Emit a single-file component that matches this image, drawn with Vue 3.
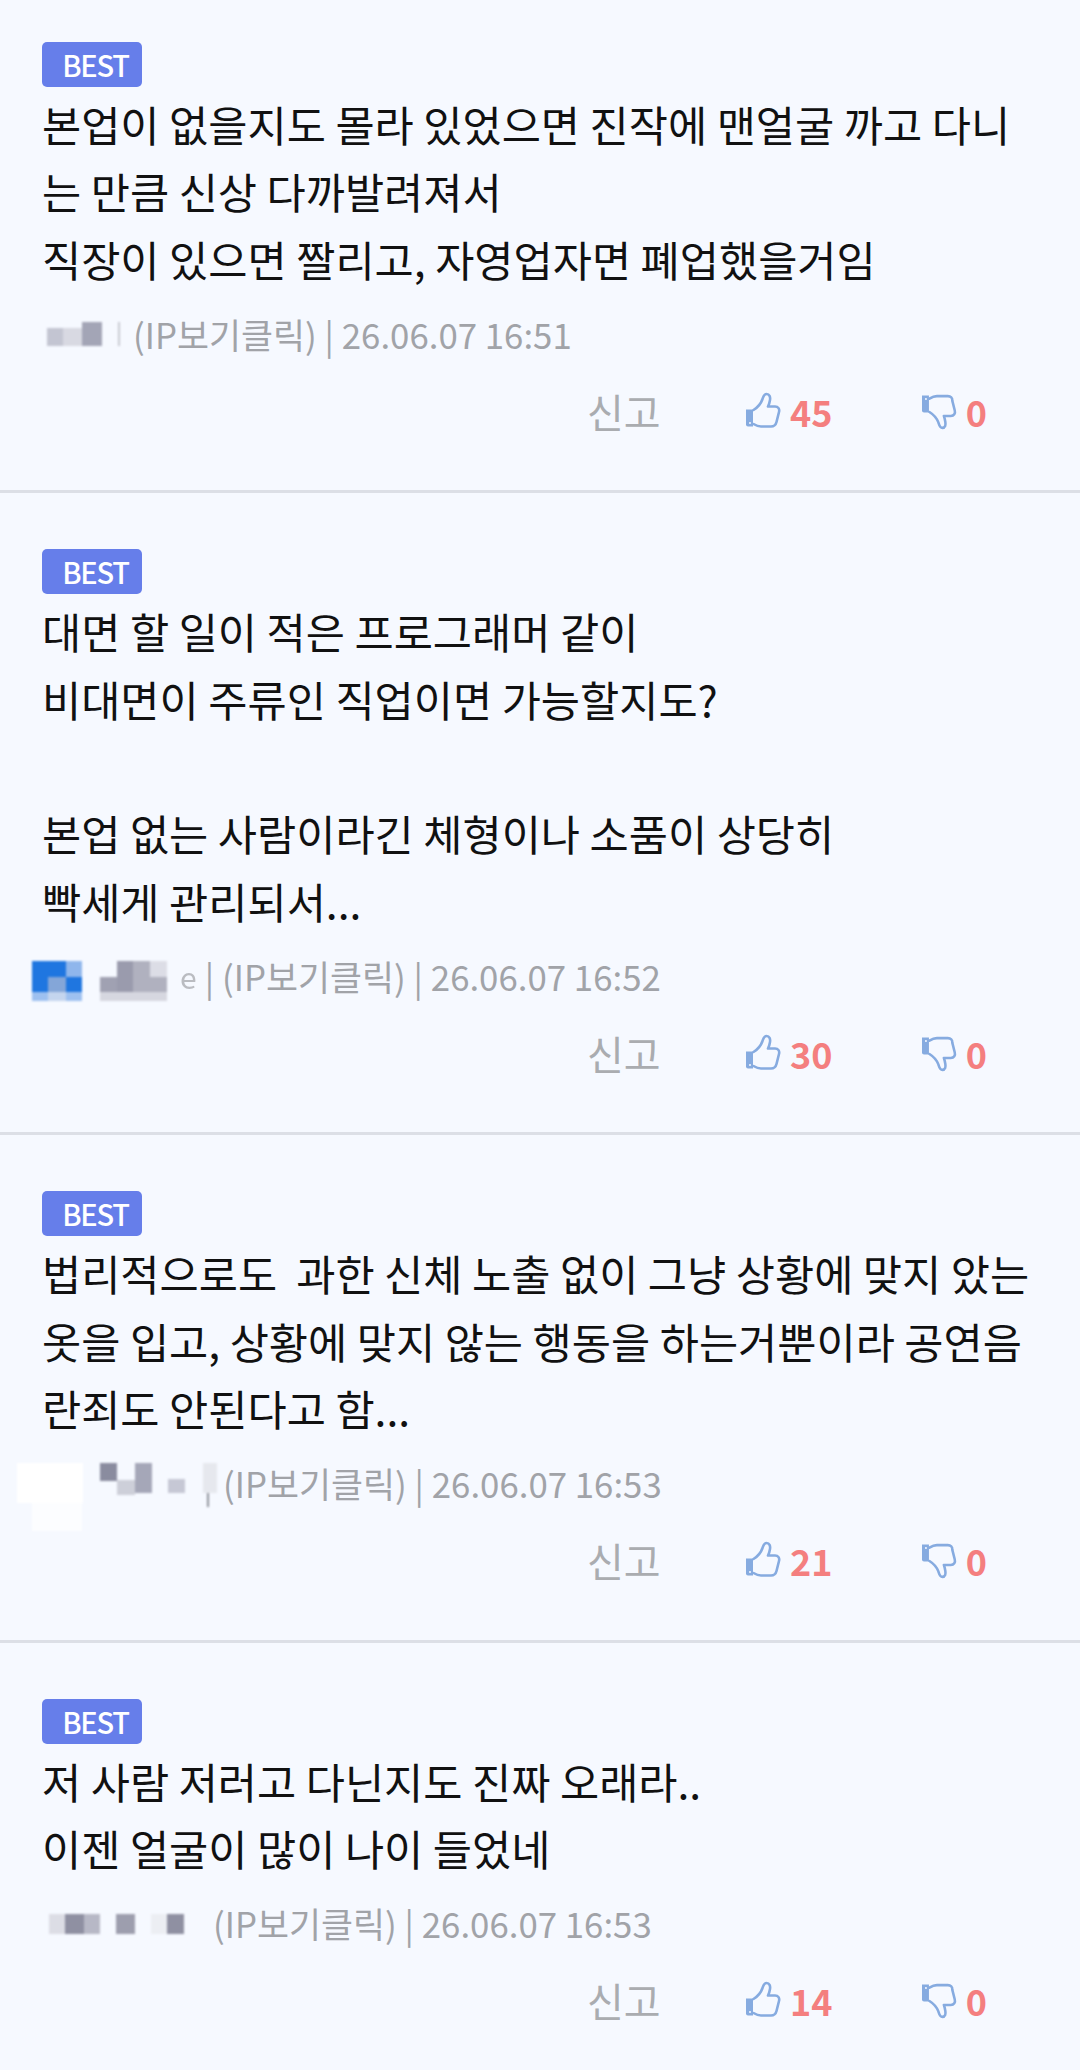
<template>
  <div class="list">
    <div class="item" v-for="c in comments" :key="c.date + c.up">
      <span class="badge">BEST</span>
      <div class="body">
        <p v-for="(line, i) in c.lines" :key="i" class="line">{{ line || "\u00a0" }}</p>
      </div>
      <div class="meta">
        <svg class="nick" :width="c.nickW" height="44" :viewBox="`0 0 ${c.nickW} 44`">
          <rect
            v-for="(b, i) in c.blocks"
            :key="i"
            :x="b[0]"
            :y="b[1]"
            :width="b[2]"
            :height="b[3]"
            :fill="b[4]"
          />
        </svg>
        <span v-if="c.tail" class="tail">{{ c.tail }}</span>
        <span v-if="c.tail" class="pipe">|</span>
        <span class="info">(IP보기클릭) | {{ c.date }}</span>
      </div>
      <div class="actions">
        <span class="report">신고</span>
        <span class="vote up">
          <svg width="36" height="38" viewBox="0 0 36 38">
            <path d="M1 17.500h7v17H3a2 2 0 0 1-2-2z" fill="#86abe0" />
            <circle cx="5" cy="31" r="1" fill="#f6f9ff" />
            <path
              d="M8.500 18c4-2.500 7.500-6.500 9-11 .8-2.500 1.500-5 4-5 3 0 4 3 3.500 6-.3 2-1 4.500-2 6.500h7c3.300 0 4.800 2.500 4 5.500l-2.500 10c-.7 2.800-2.500 4.500-5.500 4.500H16c-3 0-5-1-7.500-2.500"
              fill="none"
              stroke="#86abe0"
              stroke-width="2.600"
              stroke-linecap="round"
              stroke-linejoin="round"
            />
          </svg>
          <b>{{ c.up }}</b>
        </span>
        <span class="vote down">
          <svg width="36" height="38" viewBox="0 0 36 38">
            <path d="M1 3.500h7v17H3a2 2 0 0 1-2-2z" fill="#86abe0" />
            <circle cx="5" cy="7" r="1" fill="#f6f9ff" />
            <path
              d="M8.500 20c4 2.500 7.500 6.500 9 10.500.8 2.500 1.500 5.500 4 5.500 3 0 3.500-3 3-6-.3-2-1-4.500-1.500-6h7c3.300 0 4.800-2.500 4-5.500l-2.500-10C31.800 5.700 30 4 27 4H16c-3 0-5 1-7.500 2.500"
              fill="none"
              stroke="#86abe0"
              stroke-width="2.600"
              stroke-linecap="round"
              stroke-linejoin="round"
            />
          </svg>
          <b>{{ c.down }}</b>
        </span>
      </div>
    </div>
  </div>
</template>

<script setup>
const comments = [
  {
    lines: [
      "본업이 없을지도 몰라 있었으면 진작에 맨얼굴 까고 다니",
      "는 만큼 신상 다까발려져서",
      "직장이 있으면 짤리고, 자영업자면 폐업했을거임",
    ],
    nickW: 91,
    date: "26.06.07 16:51",
    up: 45,
    down: 0,
    blocks: [
      [5, 16, 16, 18, "#c3c5d2"],
      [21, 16, 19, 18, "#d8d9e2"],
      [40, 10, 20, 24, "#a3a5b6"],
      [76, 10, 2, 24, "#c9cad2"],
    ],
  },
  {
    lines: [
      "대면 할 일이 적은 프로그래머 같이",
      "비대면이 주류인 직업이면 가능할지도?",
      "",
      "본업 없는 사람이라긴 체형이나 소품이 상당히",
      "빡세게 관리되서...",
    ],
    nickW: 138,
    tail: "e",
    date: "26.06.07 16:52",
    up: 30,
    down: 0,
    blocks: [
      [-10, 7, 16, 16, "#1f76e0"],
      [6, 7, 18, 16, "#1f76e0"],
      [24, 7, 16, 16, "#8fb6ec"],
      [-10, 23, 16, 15, "#1f76e0"],
      [6, 23, 18, 15, "#84a6d8"],
      [24, 23, 16, 15, "#1f76e0"],
      [-10, 38, 16, 9, "#9dc0f0"],
      [6, 38, 18, 9, "#c4d5ee"],
      [24, 38, 16, 9, "#9dc0f0"],
      [58, 23, 17, 15, "#a0a1b2"],
      [75, 7, 16, 31, "#9a9bad"],
      [91, 7, 17, 31, "#b0b1bf"],
      [108, 7, 17, 16, "#dcdde6"],
      [108, 23, 17, 15, "#b0b1bf"],
      [58, 38, 67, 9, "#d6d7e0"],
    ],
  },
  {
    lines: [
      "법리적으로도  과한 신체 노출 없이 그냥 상황에 맞지 았는",
      "옷을 입고, 상황에 맞지 않는 행동을 하는거뿐이라 공연음",
      "란죄도 안된다고 함...",
    ],
    nickW: 181,
    date: "26.06.07 16:53",
    up: 21,
    down: 0,
    blocks: [
      [-25, 2, 66, 40, "#ffffff"],
      [-10, 42, 50, 28, "#fcfdff"],
      [58, 2, 17, 18, "#8a8c9f"],
      [75, 19, 18, 15, "#cdcfd9"],
      [93, 2, 17, 30, "#a5a7b8"],
      [126, 18, 17, 14, "#c6c8d5"],
      [161, 2, 14, 30, "#e6e8ee"],
      [165, 32, 2, 14, "#8f919a"],
    ],
  },
  {
    lines: ["저 사람 저러고 다닌지도 진짜 오래라..", "이젠 얼굴이 많이 나이 들었네"],
    nickW: 171,
    date: "26.06.07 16:53",
    up: 14,
    down: 0,
    blocks: [
      [7, 13, 16, 20, "#dcdde5"],
      [23, 13, 19, 20, "#8f90a2"],
      [42, 13, 16, 20, "#b7b8c6"],
      [74, 13, 19, 20, "#9d9eae"],
      [109, 13, 16, 20, "#eceef3"],
      [125, 13, 17, 20, "#8f90a2"],
    ],
  },
];
</script>

<style>
html,
body {
  background: #f6f9ff;
}
</style>

<style scoped>
.list {
  width: 1080px;
  height: 2070px;
  overflow: hidden;
  background: #f6f9ff;
  font-family: "Noto Sans CJK KR", "Noto Sans", sans-serif;
}
.item {
  padding: 56px 0 54.5px 42px;
  border-bottom: 3px solid #dcdfe6;
}
.item:first-child {
  padding-top: 42px;
}
.item:last-child {
  border-bottom: none;
}
.badge {
  display: block;
  box-sizing: border-box;
  width: 100px;
  height: 45px;
  padding-left: 7px;
  line-height: 44px;
  border-radius: 5px;
  background: #667eea;
  color: #fff;
  font-size: 29px;
  font-weight: 500;
  letter-spacing: -1.2px;
  text-align: center;
}
.body {
  margin-top: 3px;
}
.line {
  margin: 0;
  height: 67.3px;
  line-height: 67.3px;
  font-size: 42.6px;
  color: #111;
  white-space: pre;
}
.meta {
  display: flex;
  align-items: center;
  height: 44px;
  margin-top: 20px;
  color: #a1a3a8;
  font-size: 34.8px;
  white-space: nowrap;
}
.nick {
  flex: none;
  overflow: visible;
  filter: blur(0.8px);
}
.tail {
  opacity: 0.7;
  font-size: 30px;
}
.pipe {
  margin: 0 8px 0 8px;
}
.actions {
  display: flex;
  align-items: center;
  height: 50px;
  margin-top: 30px;
  padding-left: 545px;
}
.report {
  width: 158px;
  font-size: 40px;
  color: #aaacb0;
}
.vote {
  display: flex;
  align-items: center;
  gap: 9px;
  font-size: 36px;
  color: #f47f7f;
}
.vote.up {
  width: 176px;
}
.vote.down {
  width: 66px;
}
.vote b {
  font-weight: 700;
}
</style>
